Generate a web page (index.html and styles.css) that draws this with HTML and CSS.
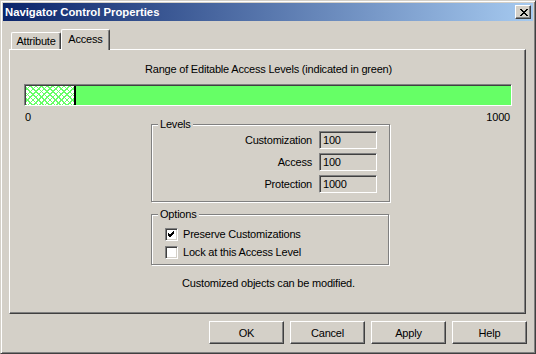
FILE: index.html
```html
<!DOCTYPE html>
<html lang="en">
<head>
  <meta charset="UTF-8">
  <title>Navigator Control Properties</title>
  <link rel="stylesheet" href="styles.css">
</head>
<body>

  <div class="window">
    <div class="titlebar">
      <span class="title">Navigator Control Properties</span>
      <button class="close-btn" title="Close">
        <svg width="8" height="7" viewBox="0 0 8 7">
          <path d="M0 0 L7 7 M1 0 L8 7 M7 0 L0 7 M8 0 L1 7" stroke="#000" stroke-width="1" shape-rendering="crispEdges"/>
        </svg>
      </button>
    </div>

    <div class="dialog">
      <div class="tabs">
        <div class="tab">Attribute</div>
        <div class="tab active">Access</div>
      </div>

      <div class="panel">
        <div class="caption">Range of Editable Access Levels (indicated in green)</div>

        <div class="range-bar">
          <div class="locked" style="width: 48px"></div>
          <div class="marker"></div>
          <div class="editable"></div>
        </div>

        <div class="scale">
          <span>0</span>
          <span>1000</span>
        </div>

        <div class="group levels">
          <span class="legend">Levels</span>
          <div class="field-grid">
            <label>Customization</label>
            <div class="textbox">100</div>
            <label>Access</label>
            <div class="textbox">100</div>
            <label>Protection</label>
            <div class="textbox">1000</div>
          </div>
        </div>

        <div class="group options">
          <span class="legend">Options</span>
          <div class="check-row">
            <span class="checkbox">
              <svg width="7" height="7" viewBox="0 0 7 7">
                <path d="M0 2 L2 4 L6 0 M0 3 L2 5 L6 1 M0 4 L2 6 L6 2" stroke="#000" stroke-width="1" fill="none" shape-rendering="crispEdges"/>
              </svg>
            </span>
            Preserve Customizations
          </div>
          <div class="check-row">
            <span class="checkbox"></span>
            Lock at this Access Level
          </div>
        </div>

        <div class="note">Customized objects can be modified.</div>
      </div>

      <div class="buttons">
        <button class="btn">OK</button>
        <button class="btn">Cancel</button>
        <button class="btn">Apply</button>
        <button class="btn">Help</button>
      </div>
    </div>
  </div>

</body>
</html>
```

FILE: styles.css
```css
* {
  margin: 0;
  padding: 0;
  box-sizing: border-box;
  font-family: "Liberation Sans", Arial, sans-serif;
  font-size: 11px;
  letter-spacing: -0.2px;
}

body {
  background-color: #d4d0c8;
  width: 536px;
  height: 354px;
  overflow: hidden;
}

.window {
  width: 536px;
  height: 354px;
  background-color: #d4d0c8;
  border: 1px solid;
  border-color: #d4d0c8 #404040 #404040 #d4d0c8;
  box-shadow: inset 1px 1px #fff, inset -1px -1px #808080;
  padding: 2px;
  display: flex;
  flex-direction: column;
}

.titlebar {
  height: 18px;
  background: linear-gradient(to right, #0a246a, #a6caf0);
  display: flex;
  align-items: center;
  justify-content: space-between;
  padding: 0 2px;
}

.title {
  color: white;
  font-weight: bold;
  font-size: 11.3px;
  letter-spacing: 0;
}

.close-btn {
  width: 16px;
  height: 14px;
  background-color: #d4d0c8;
  border: 1px solid;
  border-color: #fff #404040 #404040 #fff;
  box-shadow: inset -1px -1px #808080;
  display: flex;
  align-items: center;
  justify-content: center;
  padding-left: 1px;
}

.close-btn svg {
  display: block;
}

.dialog {
  flex-grow: 1;
  padding: 8px 7px 0 6px;
  display: flex;
  flex-direction: column;
}

.tabs {
  display: flex;
  align-items: flex-end;
  height: 20px;
  padding-left: 2px;
}

.tab {
  height: 17px;
  width: 50px;
  text-align: center;
  line-height: 16px;
  border-top: 1px solid #fff;
  border-left: 1px solid #fff;
  border-right: 1px solid #404040;
  border-radius: 2px 2px 0 0;
  box-shadow: inset -1px 0 #808080;
}

.tab.active {
  position: relative;
  z-index: 1;
  height: 21px;
  width: 49px;
  margin-bottom: -1px;
  background-color: #d4d0c8;
  line-height: 18px;
}

.panel {
  height: 265px;
  border: 1px solid;
  border-color: #fff #404040 #404040 #fff;
  box-shadow: inset -1px -1px #808080;
  display: flex;
  flex-direction: column;
}

.caption {
  text-align: center;
  line-height: 13px;
  margin-top: 13px;
  padding-left: 2px;
}

.range-bar {
  display: flex;
  height: 22px;
  margin: 8px 13px 0 14px;
  border: 1px solid;
  border-color: #808080 #fff #fff #808080;
  box-shadow: inset 1px 1px #404040;
  padding: 1px 0 0 1px;
}

.locked {
  background-color: #fff;
  background-image:
    repeating-linear-gradient(45deg, #66ff66 0 1px, transparent 1px 4px),
    repeating-linear-gradient(-45deg, #66ff66 0 1px, transparent 1px 4px);
}

.marker {
  width: 2px;
  background-color: #000;
}

.editable {
  flex-grow: 1;
  background-color: #66ff66;
}

.scale {
  display: flex;
  justify-content: space-between;
  line-height: 13px;
  margin: 5px 15px 0 15px;
}

.group {
  position: relative;
  border: 1px solid #808080;
  box-shadow: inset 1px 1px #fff, 1px 1px #fff;
}

.legend {
  position: absolute;
  top: -7px;
  left: 6px;
  padding: 0 2px 0 2px;
  background-color: #d4d0c8;
  line-height: 13px;
}

.levels {
  width: 239px;
  height: 78px;
  margin-left: 141px;
  padding: 6px 12px 0 0;
}

.field-grid {
  display: grid;
  grid-template-columns: auto 58px;
  grid-auto-rows: 18px;
  row-gap: 4px;
  column-gap: 7px;
  justify-content: end;
  align-items: center;
}

.field-grid label {
  text-align: right;
}

.textbox {
  height: 18px;
  border: 1px solid;
  border-color: #808080 #fff #fff #808080;
  box-shadow: inset 1px 1px #404040, inset -1px -1px #d4d0c8;
  padding: 2px 0 0 3px;
  line-height: 13px;
}

.options {
  width: 238px;
  height: 51px;
  margin: 12px 0 0 141px;
  padding: 10px 0 0 13px;
}

.check-row {
  display: flex;
  align-items: center;
  gap: 5px;
  height: 18px;
}

.checkbox {
  width: 13px;
  height: 13px;
  background-color: #fff;
  border: 1px solid;
  border-color: #808080 #fff #fff #808080;
  box-shadow: inset 1px 1px #404040, inset -1px -1px #d4d0c8;
  display: flex;
  align-items: center;
  justify-content: center;
}

.checkbox svg {
  display: block;
}

.note {
  text-align: center;
  line-height: 13px;
  margin-top: 12px;
  padding-left: 2px;
}

.buttons {
  display: flex;
  justify-content: flex-end;
  gap: 6px;
  margin-top: 7px;
  margin-right: -1px;
}

.btn {
  width: 75px;
  height: 23px;
  background-color: #d4d0c8;
  border: 1px solid;
  border-color: #fff #404040 #404040 #fff;
  box-shadow: inset -1px -1px #808080;
  color: #000;
}
```
